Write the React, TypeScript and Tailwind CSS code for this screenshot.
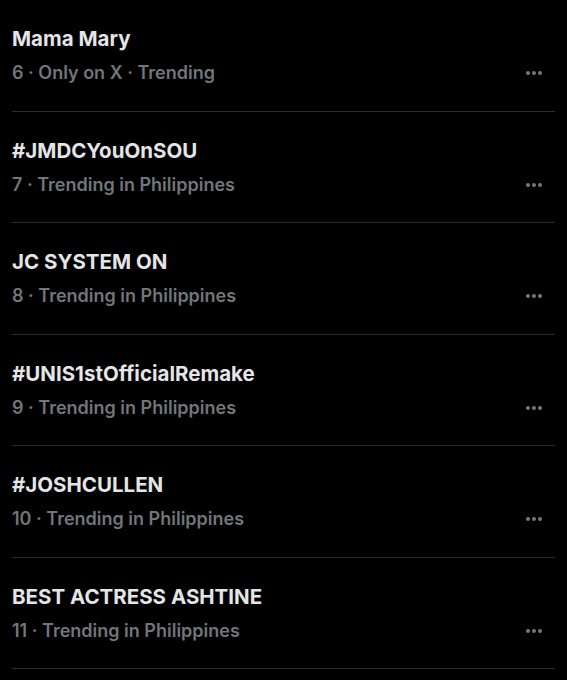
const trends = [
  { rank: 6, title: "Mama Mary", context: "Only on X · Trending" },
  { rank: 7, title: "#JMDCYouOnSOU", context: "Trending in Philippines" },
  { rank: 8, title: "JC SYSTEM ON", context: "Trending in Philippines" },
  { rank: 9, title: "#UNIS1stOfficialRemake", context: "Trending in Philippines" },
  { rank: 10, title: "#JOSHCULLEN", context: "Trending in Philippines" },
  { rank: 11, title: "BEST ACTRESS ASHTINE", context: "Trending in Philippines" },
];

function MoreDots() {
  return (
    <svg width="18" height="6" viewBox="0 0 18 6" className="text-[#75787d]">
      <circle cx="3" cy="3" r="2" fill="currentColor" />
      <circle cx="9" cy="3" r="2" fill="currentColor" />
      <circle cx="15" cy="3" r="2" fill="currentColor" />
    </svg>
  );
}

export default function App() {
  return (
    <div className="w-[567px] h-[680px] bg-black overflow-hidden font-['Inter','Liberation_Sans',sans-serif]">
      <div className="mx-3">
        {trends.map((t) => (
          <div
            key={t.rank}
            className="h-[111.5px] border-b border-[#2a2c30] flex items-start justify-between pt-[26px]"
          >
            <div className="flex flex-col">
              <span className="text-[20.5px] leading-[26px] font-bold text-[#e3e5e6]">
                {t.title}
              </span>
              <span className="mt-[9px] text-[18px] leading-[24px] font-semibold text-[#71767b]">
                {t.rank} · {t.context}
              </span>
            </div>
            <div className="mt-[44px] mr-[12px]">
              <MoreDots />
            </div>
          </div>
        ))}
      </div>
    </div>
  );
}
